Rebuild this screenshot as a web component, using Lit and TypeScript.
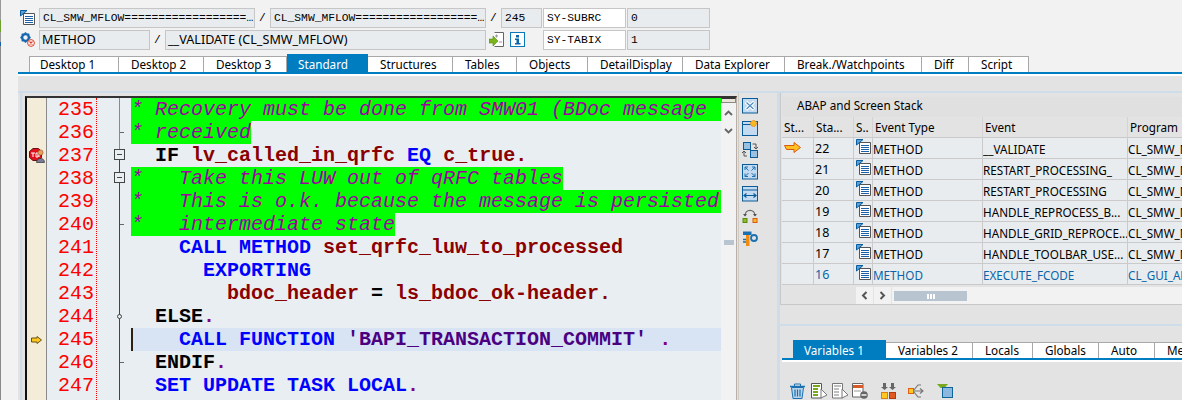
import { LitElement, html, css, svg } from "lit";
import { customElement } from "lit/decorators.js";

const docIcon = html`<svg class="ic15" viewBox="0 0 15 15"><path d="M3.5 3.5H14.5V14.5H3.5Z" fill="#fff" stroke="#555"/><path d="M0.5 0.5H7L0.5 6Z" fill="#5aa0d8" stroke="#0a5c9c"/><path d="M5 6.5H13M5 8.5H13M5 10.5H13M5 12.5H13" stroke="#1a5fa8" stroke-width="1.2"/></svg>`;
const gearIcon = html`<svg class="ic15" viewBox="0 0 15 15"><circle cx="5.5" cy="5.5" r="3.4" fill="none" stroke="#1668b0" stroke-width="2.4"/><path d="M5.5 .3V2.2M5.5 8.8V10.7M.3 5.5H2.2M8.8 5.5H10.7M1.8 1.8L3 3M8 8L9.2 9.2M9.2 1.8L8 3M3 8L1.8 9.2" stroke="#1668b0" stroke-width="1.5"/><circle cx="11" cy="11" r="3.4" fill="#fff" stroke="#d8402c"/><path d="M9.5 9.5L12.5 12.5M12.5 9.5L9.5 12.5" stroke="#d8402c" stroke-width="1.2"/></svg>`;
const navIcon = html`<svg class="ic15" viewBox="0 0 15 15"><path d="M5.5 .5H14.5V14.5H5.5" fill="#fff" stroke="#666"/><path d="M6 4H9M7.5 2.5V5.5M10 10H13" stroke="#999" stroke-width="1.2"/><path d="M0 7H4V4L9 9L4 14V11H0Z" fill="#7cb518" stroke="#4f8a10" stroke-width=".6"/></svg>`;
const infoIcon = html`<svg class="ic15" viewBox="0 0 15 15"><rect x=".5" y=".5" width="14" height="14" fill="#fff" stroke="#0b78bd"/><path d="M6 3H9V5.5H6ZM5 6.5H9V11H10.5V12.5H5V11H6.5V8H5Z" fill="#0b64a8"/></svg>`;
const bpIcon = html`<svg class="bp" viewBox="0 0 16 15"><path d="M4 .5H9.5L12.5 3.5V9.5L9.5 12.5H4L.5 9.5V3.5Z" fill="#e0101c" stroke="#6a1010"/><path d="M2 5H6M4 5V9M7 5V9H9V5H7M10 5V9" stroke="#fff" stroke-width="1" fill="none"/><circle cx="11.5" cy="4.5" r="2.6" fill="#e8a060" stroke="#8a5020" stroke-width=".6"/><path d="M7.5 14.5C7.5 9 15.5 9 15.5 14.5Z" fill="#7a7a9a" stroke="#333" stroke-width=".7"/></svg>`;
const smallArrow = html`<svg class="pc" viewBox="0 0 11 8"><path d="M.5 2H6V.5L10.5 4L6 7.5V6H.5Z" fill="#ffc820" stroke="#6a5010"/></svg>`;
const orangeArrow = html`<svg class="oa" viewBox="0 0 17 11"><path d="M.5 3.5H10V.5L16.5 5.5L10 10.5V7.5H2.5Z" fill="#ffc020" stroke="#d85a10"/></svg>`;

const F = "#0a5c98";
const sideIcons = [
  svg`<rect x=".5" y=".5" width="15" height="14.5" fill="#c4daf0" stroke="${F}"/><path d="M4 4L12 11.5M12 4L4 11.5" stroke="#fff" stroke-width="3.4"/><path d="M4.5 4.5L11.5 11M11.5 4.5L4.5 11" stroke="#4a8cc4" stroke-width="1.2"/>`,
  svg`<rect x=".5" y="1.5" width="15" height="14" fill="#c4daf0" stroke="${F}"/><path d="M1 4.5H10" stroke="${F}"/><circle cx="11.5" cy="3.5" r="3" fill="#f8b820" stroke="#e88010" stroke-dasharray="1 .6"/>`,
  svg`<rect x="1.5" y=".5" width="7" height="7" fill="#9cc0e0" stroke="${F}"/><rect x="8.5" y="8.5" width="7" height="7" fill="#9cc0e0" stroke="${F}"/><path d="M10.5 2H14V6M12 5L14 7L16 5M5 14H2V10M0 11L2 9L4 11" fill="none" stroke="#555"/>`,
  svg`<rect x=".5" y=".5" width="15" height="14.5" fill="#c4daf0" stroke="${F}"/><path d="M3 3H6M3 3V6M13 3H10M13 3V6M3 12.5H6M3 12.5V9.5M13 12.5H10M13 12.5V9.5M3 3L6.5 6.5M13 3L9.5 6.5M3 12.5L6.5 9M13 12.5L9.5 9" stroke="#1a70b0" fill="none"/>`,
  svg`<rect x=".5" y=".5" width="15" height="14.5" fill="#c4daf0" stroke="${F}"/><path d="M1 4H15" stroke="${F}"/><path d="M2 9.5H14M4.5 7.5L2 9.5L4.5 11.5M11.5 7.5L14 9.5L11.5 11.5" fill="none" stroke="${F}" stroke-width="1.2"/>`,
  svg`<path d="M3 8C3 .5 13 .5 13 8" fill="none" stroke="#666" stroke-width="1.2"/><path d="M1 6H5L3 8.5ZM11 6H15L13 8.5Z" fill="#555"/><rect x="1" y="10.5" width="4" height="4" fill="#8cbc20" stroke="#5a8a10"/><rect x="11" y="10.5" width="4" height="4" fill="#f8b820" stroke="#d85a10"/>`,
  svg`<path d="M1 1.5H9.5V5H1Z" fill="#1a70b0"/><path d="M4 5H7.5V16H4Z" fill="#f08c10"/><circle cx="12" cy="8" r="3" fill="none" stroke="#1a70b0" stroke-width="1.8"/><path d="M1 9.5H4M1 12H4" stroke="#1a70b0" stroke-width="1.4"/>`,
];
const bottomIcons = [
  svg`<path d="M1 3.5H16" stroke="#1a70b0" stroke-width="1.5"/><path d="M5.5 3V1H11.5V3" fill="none" stroke="#1a70b0"/><path d="M2.5 4.5H14.5L13 15.5H4Z" fill="#bcd4ea" stroke="#1a70b0"/><path d="M6 6.5V13.5M8.5 6.5V13.5M11 6.5V13.5" stroke="#1a70b0" stroke-width="1.2"/>`,
  svg`<path d="M.5 .5H10.5V15H.5Z" fill="#fff" stroke="#555"/><path d="M2 3H9M2 6H7M2 9H7M2 12H7" stroke="#78a81c" stroke-width="2"/><path d="M10 6L16 12L10 15Z" fill="#fff" stroke="#777"/>`,
  svg`<path d="M.5 .5H10.5V15H.5Z" fill="#fff" stroke="#777"/><path d="M2 3H9M2 6H7M2 9H7M2 12H7" stroke="#aaa" stroke-width="1.5"/><path d="M10 6L16 12L10 15Z" fill="#fff" stroke="#777"/>`,
  svg`<path d="M.5 .5H11V14H.5Z" fill="#fff" stroke="#666"/><path d="M1 2H11V5H1Z" fill="#d85a28"/><path d="M2 8H9" stroke="#999"/><circle cx="12" cy="12" r="3.8" fill="#666"/><path d="M9.5 12H14.5" stroke="#fff" stroke-width="1.4"/>`,
  svg`<path d="M3 0V4H1L4.5 7L8 4H6V0ZM11 0V4H9L12.5 7L16 4H14V0Z" fill="#666"/><rect x="1.5" y="9.5" width="6" height="6" fill="#ffc820" stroke="#d88010"/><rect x="9.5" y="9.5" width="6" height="6" fill="#e05a20" stroke="#b03a10"/>`,
  svg`<rect x=".5" y="5.5" width="5" height="5" fill="#ffc820" stroke="#e06010"/><path d="M6 8H15M12 5.5L15 8L12 10.5M6 7L10 2H13M6 9L10 14H13" fill="none" stroke="#777" stroke-width="1.1"/>`,
  svg`<path d="M0 1H11L7.5 5H3.5Z" fill="#78a81c"/><rect x="5.5" y="4.5" width="10" height="10" fill="#8cb8e0" stroke="#0f6498"/>`,
];

const headerRows = [
  { icon: docIcon, items: [
    ["f mono", 216, "CL_SMW_MFLOW==================…"], ["s"], ["f mono", 216, "CL_SMW_MFLOW==================…"], ["s"], ["f mono", 41, "245"], ["gap1"], ["fw mono", 83, "SY-SUBRC"], ["gap1"], ["f mono", 83, "0"],
  ]},
  { icon: gearIcon, items: [
    ["f", 111, "METHOD"], ["s"], ["f", 321, "__VALIDATE (CL_SMW_MFLOW)"], ["icons"], ["fw mono", 83, "SY-TABIX"], ["gap1"], ["f mono", 83, "1"],
  ]},
];

const topTabs: [string, number, boolean?][] = [
  ["Desktop 1", 90], ["Desktop 2", 85], ["Desktop 3", 83], ["Standard", 81, true], ["Structures", 85], ["Tables", 64], ["Objects", 71], ["DetailDisplay", 95], ["Data Explorer", 102], ["Break./Watchpoints", 137], ["Diff", 47], ["Script", 60],
];
const varTabs: [string, number, boolean?][] = [
  ["Variables 1", 93, true], ["Variables 2", 87], ["Locals", 60], ["Globals", 66], ["Auto", 56], ["Me", 40],
];

type Seg = [string, string];
const rows: { n: number; cls?: string; segs: Seg[]; mark?: string }[] = [
  { n: 235, segs: [["c", "* Recovery must be done from SMW01 (BDoc message"]], cls: "fill" },
  { n: 236, segs: [["c g", "* received"]] },
  { n: 237, mark: "bp", segs: [["t", "  "], ["k0", "IF"], ["t", " "], ["v", "lv_called_in_qrfc"], ["t", " "], ["k", "EQ"], ["t", " "], ["v", "c_true."]] },
  { n: 238, segs: [["c g", "*   Take this LUW out of qRFC tables"]] },
  { n: 239, cls: "fill", segs: [["c", "*   This is o.k. because the message is persisted"]] },
  { n: 240, segs: [["c g", "*   intermediate state"]] },
  { n: 241, segs: [["t", "    "], ["k", "CALL METHOD"], ["t", " "], ["v", "set_qrfc_luw_to_processed"]] },
  { n: 242, segs: [["t", "      "], ["k", "EXPORTING"]] },
  { n: 243, segs: [["t", "        "], ["v", "bdoc_header"], ["k0", " = "], ["v", "ls_bdoc_ok-header."]] },
  { n: 244, segs: [["t", "  "], ["k0", "ELSE"], ["d", "."]] },
  { n: 245, mark: "pc", cls: "cur", segs: [["t", "    "], ["k", "CALL FUNCTION"], ["t", " "], ["st", "'BAPI_TRANSACTION_COMMIT'"], ["t", " "], ["d", "."]] },
  { n: 246, segs: [["t", "  "], ["k0", "ENDIF"], ["d", "."]] },
  { n: 247, segs: [["t", "  "], ["k", "SET UPDATE TASK LOCAL"], ["d", "."]] },
];

const stack = [
  [22, "__VALIDATE", "CL_SMW_MFLOW"],
  [21, "RESTART_PROCESSING_", "CL_SMW_MFLOW"],
  [20, "RESTART_PROCESSING", "CL_SMW_MFLOW"],
  [19, "HANDLE_REPROCESS_B...", "CL_SMW_MFLOW"],
  [18, "HANDLE_GRID_REPROCE...", "CL_SMW_MFLOW"],
  [17, "HANDLE_TOOLBAR_USE...", "CL_SMW_MFLOW"],
  [16, "EXECUTE_FCODE", "CL_GUI_ALV_GRID"],
];

@customElement("app-root")
export class AppRoot extends LitElement {
  static styles = css`
    :host { display: block; width: 1182px; height: 400px; overflow: hidden; background: #f2f2f2;
      font-family: "Noto Sans", "Liberation Sans", sans-serif; font-size: 11.7px; color: #000; }
    * { box-sizing: border-box; }
    svg { display: block; flex: none; }
    .ic15 { width: 15px; height: 15px; }
    .page { display: flex; height: 400px; }
    .rail { width: 18px; flex: none; display: flex; }
    .rail i { display: block; width: 1px; background: linear-gradient(#9a9a9a 0 20px, #70a030 20px 32px, #9a9a9a 32px 42px, #1a5fa8 42px 46px, #8a8a8a 46px); }
    .main { flex: 1; min-width: 0; display: flex; flex-direction: column; }
    .head { height: 54px; padding-top: 8px; display: flex; flex-direction: column; gap: 2px; }
    .hrow { display: flex; height: 20px; align-items: stretch; }
    .hicon { width: 21px; flex: none; padding: 2px 0 0 2px; }
    .f, .fw { flex: none; border: 1px solid #c6c6c6; background: #e9ecef; padding: 0 2px; line-height: 18px; white-space: nowrap; overflow: hidden; font-size: 12.6px; }
    .fw { background: #fff; }
    .mono { font-family: "Liberation Mono", monospace; font-size: 11.3px; padding-left: 3px; }
    .s { width: 15px; flex: none; text-align: center; font-family: "Liberation Mono", monospace; font-size: 11.3px; line-height: 20px; }
    .gap1 { width: 1px; flex: none; }
    .icons { width: 57px; flex: none; display: flex; gap: 6px; padding: 2px 0 0 3px; }
    .tabs { display: flex; align-items: flex-end; height: 18px; padding-left: 11px; }
    .tab { flex: none; height: 16px; line-height: 15px; padding-left: 12px; background: #fff; border-top: 1px solid #a8a8a8; border-right: 1px solid #a8a8a8; white-space: nowrap; overflow: hidden; }
    .tab:first-child { border-left: 1px solid #a8a8a8; padding-left: 10px; }
    .tab.on { height: 18px; line-height: 20px; padding-left: 11px; background: #007cc0; color: #fff; border: none; }
    .bar { height: 2px; background: #007cc0; flex: none; }
    .whitebar { height: 2px; background: #fff; flex: none; }
    .work { flex: 1; min-height: 0; background: #e3e3e3; display: flex; flex-direction: column; padding-top: 15px; }
    .rule { height: 2px; background: #cfdcea; flex: none; }
    .body { flex: 1; min-height: 0; display: flex; }
    .ledge { width: 7px; flex: none; padding-left: 2px; }
    .ledge i { display: block; width: 2px; height: 100%; background: #cfdcea; }
    .editor { width: 712px; flex: none; margin-top: 3px; border-top: 2px solid #333; border-left: 2px solid #111; border-right: 1px solid #b8b0a8; display: flex; overflow: hidden; background: #e8eef1; }
    .gut { width: 20px; flex: none; background: #f3ecd9; border-right: 1px solid #8a8a8a; }
    .gcell { height: 23px; display: flex; align-items: center; justify-content: center; }
    .bp { width: 16px; height: 15px; }
    .pc { width: 11px; height: 8px; margin-right: 1px; }
    .nums { width: 50px; flex: none; border-right: 1px dotted #f00; font-family: "Liberation Mono", monospace; font-size: 20px; color: #f00; text-align: right; padding-right: 2px; }
    .nums div { height: 23px; line-height: 23px; }
    .fold { width: 34px; flex: none; }
    .fold svg { width: 34px; height: 302px; }
    .code { flex: 1; min-width: 0; font-family: "Liberation Mono", monospace; font-size: 20px; overflow: hidden; }
    .line { height: 23px; line-height: 23px; white-space: pre; overflow: hidden; }
    .line.fill { background: #00ff00; }
    .line.cur { background: #d8e4f4; box-shadow: inset 2px 0 0 #2a2015; }
    .g { background: #00ff00; display: inline-block; height: 23px; }
    .c { color: #a000a0; font-style: italic; }
    .k { color: #0000ff; font-weight: 700; }
    .k0 { color: #000; font-weight: 700; }
    .v { color: #8b0000; font-weight: 700; }
    .d { color: #800080; font-weight: 700; }
    .st { color: #4b0082; font-weight: 700; }
    .sb { width: 15px; flex: none; background: #f2f2f2; display: flex; flex-direction: column; align-items: center; }
    .thumb { width: 15px; height: 5px; background: #e8e4da; border: 1px solid #8a8a80; border-top-color: #333; flex: none; }
    .sb svg { width: 9px; height: 6px; }
    .sbup { margin-top: 7px; }
    .sbdown { margin-top: 12px; }
    .sbmark { width: 10px; height: 5px; background: #b8c4d0; margin-top: 106px; }
    .tools { width: 39px; flex: none; margin-left: 1px; border-left: 1px solid #cfcac2; padding: 5px 0 0 3px; display: flex; flex-direction: column; gap: 6px; }
    .tools svg { width: 16px; height: 16px; }
    .split { width: 3px; flex: none; background: #cfdcea; }
    .right { flex: 1; min-width: 0; display: flex; flex-direction: column; }
    .stack { height: 212px; flex: none; border-left: 1px solid #c8c8c8; border-bottom: 1px solid #c8c8c8; padding: 4px 0 0 1px; overflow: hidden; }
    .title { height: 20px; line-height: 17px; background: #e0e0e0; padding-left: 15px; }
    .grid { display: grid; grid-template-columns: 32px 40px 19px 110px 145px 56px; }
    .th, .td { height: 21px; border-right: 1px solid #cacaca; border-bottom: 1px solid #cacaca; white-space: nowrap; overflow: hidden; }
    .th { line-height: 20px; padding-left: 2px; background: #e3e3e3; border-right-color: #d4d4d4; }
    .td { background: #e8ecef; line-height: 22px; }
    .td.txt { padding-left: 0; }
    .td.b { color: #0b64a8; }
    .td.ic { padding: 1px 0 0 2px; }
    .td.ar { padding: 4px 0 0 2px; }
    .oa { width: 17px; height: 11px; }
    .td.num { padding-left: 1px; font-size: 12.5px; }
    .hscroll { display: flex; height: 17px; margin-top: 2px; padding-left: 74px; gap: 1px; }
    .hb { width: 17px; background: #f2f2f2; display: flex; align-items: center; justify-content: center; }
    .hb svg { width: 7px; height: 9px; }
    .track { flex: 1; background: #f2f2f2; padding: 4px 0 0 2px; }
    .hthumb { width: 73px; height: 10px; background: #b8c4d0; display: flex; justify-content: center; align-items: center; gap: 1px; }
    .hthumb i { width: 2px; height: 5px; background: #fff; }
    .gapz { height: 19px; flex: none; }
    .vars { flex: 1; min-height: 0; padding-left: 2px; display: flex; flex-direction: column; }
    .vtabs { display: flex; align-items: flex-end; height: 18px; padding-left: 11px; margin-top: 14px; overflow: hidden; flex: none; }
    .vtabs .tab { border-left: none; }
    .vtools { display: flex; padding: 21px 0 0 7px; }
    .vtools svg { width: 17px; height: 16px; margin-right: var(--mr, 4px); }
  `;

  tabs(list: [string, number, boolean?][]) {
    return list.map(([t, w, on]) => html`<div class="tab ${on ? "on" : ""}" style="width:${w}px">${t}</div>`);
  }

  render() {
    const gaps = [5, 4, 3, 11, 11, 12, 0];
    return html`<div class="page">
      <div class="rail"><i></i></div>
      <div class="main">
        <div class="head">
          ${headerRows.map((r) => html`<div class="hrow"><div class="hicon">${r.icon}</div>${r.items.map((it) => {
            const [c, w, t] = it as [string, number?, string?];
            if (c === "icons") return html`<div class="icons">${navIcon}${infoIcon}</div>`;
            if (!w) return html`<div class="${c}">${c === "s" ? "/" : ""}</div>`;
            return html`<div class="${c}" style="width:${w}px">${t}</div>`;
          })}</div>`)}
        </div>
        <div class="tabs">${this.tabs(topTabs)}</div>
        <div class="bar"></div>
        <div class="whitebar"></div>
        <div class="work">
          <div class="rule"></div>
          <div class="body">
            <div class="ledge"><i></i></div>
            <div class="editor">
              <div class="gut">${rows.map((r) => html`<div class="gcell">${r.mark === "bp" ? bpIcon : r.mark === "pc" ? smallArrow : ""}</div>`)}</div>
              <div class="nums">${rows.map((r) => html`<div>${r.n}</div>`)}</div>
              <div class="fold"><svg viewBox="0 0 34 302">
                <path d="M22.5 0V51" stroke="#8a8a8a" fill="none"/>
                <path d="M22.5 51V302" stroke="#444" fill="none"/>
                <path d="M23 34.5H27M23 126.5H27M23 264.5H27" stroke="#666" fill="none"/>
                <rect x="17.5" y="51.5" width="10" height="10" fill="#e8eef1" stroke="#444"/>
                <path d="M20 56.5H25" stroke="#444"/>
                <rect x="17.5" y="74.5" width="10" height="10" fill="#e8eef1" stroke="#444"/>
                <path d="M20 79.5H25" stroke="#444"/>
                <circle cx="22.5" cy="218.5" r="2" fill="#e8eef1" stroke="#444"/>
              </svg></div>
              <div class="code">${rows.map((r) => html`<div class="line ${r.cls ?? ""}">${r.segs.map(([c, t]) => html`<span class="${c}">${t}</span>`)}</div>`)}</div>
              <div class="sb">
                <div class="thumb"></div>
                <svg class="sbup" viewBox="0 0 9 6"><path d="M1 5L4.5 1.5L8 5" fill="none" stroke="#666" stroke-width="1.8"/></svg>
                <svg class="sbdown" viewBox="0 0 9 6"><path d="M1 1L4.5 4.5L8 1" fill="none" stroke="#666" stroke-width="1.8"/></svg>
                <div class="sbmark"></div>
              </div>
            </div>
            <div class="tools">${sideIcons.map((s) => html`<svg viewBox="0 0 16 16">${s}</svg>`)}</div>
            <div class="split"></div>
            <div class="right">
              <div class="stack">
                <div class="title">ABAP and Screen Stack</div>
                <div class="grid">
                  <div class="th">St...</div><div class="th">Sta...</div><div class="th">S..</div><div class="th">Event Type</div><div class="th">Event</div><div class="th">Program</div>
                  ${stack.map(([n, ev, prog], i) => {
                    const b = i === 6 ? "b" : "";
                    return html`<div class="td ar">${i === 0 ? orangeArrow : ""}</div>
                      <div class="td num ${b}">${n}</div>
                      <div class="td ic">${docIcon}</div>
                      <div class="td txt ${b}">METHOD</div>
                      <div class="td txt ${b}">${ev}</div>
                      <div class="td txt ${b}">${prog}</div>`;
                  })}
                </div>
                <div class="hscroll">
                  <div class="hb"><svg viewBox="0 0 7 9"><path d="M5.5 1L2 4.5L5.5 8" fill="none" stroke="#555" stroke-width="2"/></svg></div>
                  <div class="hb"><svg viewBox="0 0 7 9"><path d="M1.5 1L5 4.5L1.5 8" fill="none" stroke="#555" stroke-width="2"/></svg></div>
                  <div class="track"><div class="hthumb"><i></i><i></i><i></i></div></div>
                </div>
              </div>
              <div class="gapz"></div>
              <div class="rule"></div>
              <div class="vars">
                <div class="vtabs">${this.tabs(varTabs)}</div>
                <div class="bar"></div>
                <div class="whitebar"></div>
                <div class="vtools">${bottomIcons.map((s, i) => html`<svg viewBox="0 0 17 16" style="--mr:${gaps[i]}px">${s}</svg>`)}</div>
              </div>
            </div>
          </div>
        </div>
      </div>
    </div>`;
  }
}
